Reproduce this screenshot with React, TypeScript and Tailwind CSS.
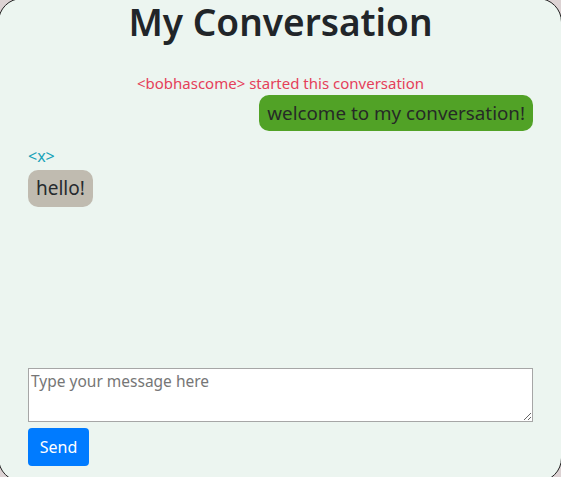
export default function App() {
  return (
    <div className="w-full h-[477px] overflow-hidden bg-[#ddd3d4] font-['Noto_Sans',sans-serif]">
      <div className="-ml-[2px] -mt-[2px] w-[564px] h-[484px] rounded-[24px] border border-[#222] bg-[#ecf5f0] flex flex-col pl-[29px] pr-[28px] pb-[15px]">
        {/* header */}
        <h1 className="mt-[3px] text-center text-[37px] leading-[40px] font-semibold text-[#212529]">
          My Conversation
        </h1>

        {/* messages */}
        <p className="mt-[29px] text-center text-[15px] leading-[24px] text-[#e5405a]">
          &lt;bobhascome&gt; started this conversation
        </p>
        <div className="self-end rounded-[10px] bg-[#51a226] px-[8px] h-[36px] flex items-center text-[18.8px] text-[#262a26]">
          welcome to my conversation!
        </div>

        <span className="mt-[14px] self-start text-[16px] leading-[22px] text-[#1aa3b9]">&lt;x&gt;</span>
        <div className="mt-[3px] self-start rounded-[10px] bg-[#c0bbb0] px-[8px] h-[37px] flex items-center text-[19px] text-[#262a2e]">
          hello!
        </div>

        {/* composer */}
        <div className="mt-auto flex flex-col gap-[6px]">
          <textarea
            placeholder="Type your message here"
            className="w-[505px] h-[54px] border border-[#a6a6a6] bg-white px-[2px] py-[1px] text-[15.5px] leading-[22px] text-[#212529] placeholder:text-[#767676] outline-none"
          />
          <button className="self-start w-[61px] h-[38px] rounded-[4px] bg-[#007bff] text-white text-[16px]">
            Send
          </button>
        </div>
      </div>
    </div>
  );
}
